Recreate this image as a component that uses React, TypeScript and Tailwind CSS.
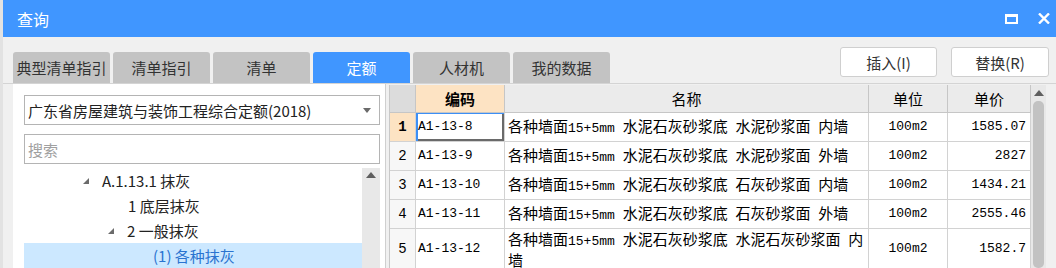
import React from "react";

const tabs = ["典型清单指引", "清单指引", "清单", "定额", "人材机", "我的数据"];

const rows = [
  { n: "1", code: "A1-13-8", name: ["各种墙面15+5mm 水泥石灰砂浆底 水泥砂浆面 内墙"], unit: "100m2", price: "1585.07" },
  { n: "2", code: "A1-13-9", name: ["各种墙面15+5mm 水泥石灰砂浆底 水泥砂浆面 外墙"], unit: "100m2", price: "2827" },
  { n: "3", code: "A1-13-10", name: ["各种墙面15+5mm 水泥石灰砂浆底 石灰砂浆面 内墙"], unit: "100m2", price: "1434.21" },
  { n: "4", code: "A1-13-11", name: ["各种墙面15+5mm 水泥石灰砂浆底 石灰砂浆面 外墙"], unit: "100m2", price: "2555.46" },
  { n: "5", code: "A1-13-12", name: ["各种墙面15+5mm 水泥石灰砂浆底 水泥石灰砂浆面 内", "墙"], unit: "100m2", price: "1582.7" },
];

// SimSun-like: half-width latin, full-width CJK
function Mixed({ text }: { text: string }) {
  const parts = text.match(/[\x00-\x7f]+|[^\x00-\x7f]+/g) ?? [];
  return (
    <>
      {parts.map((p, i) =>
        /^[\x00-\x7f]/.test(p) ? (
          <span key={i} className="font-['Liberation_Mono',monospace] text-[13px] whitespace-pre">
            {p}
          </span>
        ) : (
          <span key={i}>{p}</span>
        )
      )}
    </>
  );
}

function Tri() {
  return (
    <svg width="8" height="8" viewBox="0 0 8 8" className="shrink-0">
      <polygon points="7,1 7,7 1,7" fill="#6b6b6b" />
    </svg>
  );
}

function UpArrow() {
  return (
    <svg width="10" height="6" viewBox="0 0 10 6">
      <polygon points="5,0 10,6 0,6" fill="#5f5f5f" />
    </svg>
  );
}

export default function App() {
  return (
    <div className="w-[1056px] h-[268px] overflow-hidden bg-[#f0f0f0] font-['Noto_Sans_CJK_SC',sans-serif] text-[#333] border-l-[3px] border-l-[#e2e2e2]">
      {/* title bar */}
      <div className="h-[37px] bg-[#4096ff] flex items-center pr-[6px] text-white -ml-[3px] pl-[17px]">
        <span className="text-[16px] leading-none">查询</span>
        <div className="ml-auto flex items-center gap-[20px]">
          <svg width="13" height="10" viewBox="0 0 13 10">
            <rect x="1" y="1.5" width="11" height="7.5" fill="none" stroke="white" strokeWidth="2" />
            <rect x="0" y="0" width="13" height="3" fill="white" />
          </svg>
          <svg width="12" height="11" viewBox="0 0 12 11">
            <path d="M1 0.5 L11 10.5 M11 0.5 L1 10.5" stroke="white" strokeWidth="2.4" />
          </svg>
        </div>
      </div>

      {/* tabs + buttons */}
      <div className="flex h-[46px] pl-[10px] pr-[7px]">
        <div className="flex items-end gap-[3px]">
          {tabs.map((t) => (
            <div
              key={t}
              className={`w-[97px] h-[31px] rounded-t-[3px] flex items-center justify-center text-[15px] leading-none whitespace-nowrap ${
                t === "定额" ? "bg-[#4096ff] text-white" : "bg-[#c3c3c3] text-[#333]"
              }`}
            >
              {t}
            </div>
          ))}
        </div>
        <div className="ml-auto flex gap-[14px] pt-[10px]">
          <button className="w-[97px] h-[30px] bg-white border border-[#cfcfcf] rounded-[3px] text-[15px] text-[#333] leading-none">
            插入(I)
          </button>
          <button className="w-[98px] h-[30px] bg-white border border-[#cfcfcf] rounded-[3px] text-[15px] text-[#333] leading-none">
            替换(R)
          </button>
        </div>
      </div>

      {/* content */}
      <div className="flex h-[185px] border-t border-[#d4d4d4]">
        {/* left panel */}
        <div className="ml-[10px] w-[373px] bg-white border-r border-[#cfcfcf] pl-[11px] pr-[5px] pt-[11px] flex flex-col">
          <div className="h-[32px] border border-[#b4b4b4] flex items-center pl-[3px] pr-[8px] text-[15px] text-[#222]">
            <span className="leading-none">广东省房屋建筑与装饰工程综合定额(2018)</span>
            <svg width="8" height="5" viewBox="0 0 8 5" className="ml-auto">
              <polygon points="0,0 8,0 4,5" fill="#6a6a6a" />
            </svg>
          </div>
          <div className="mt-[9px] h-[32px] border border-[#b4b4b4] flex items-center pl-[3px] text-[15px] text-[#a0a0a0]">
            <span className="leading-none">搜索</span>
          </div>
          <div className="mt-[4px] flex flex-1">
            <div className="flex-1 flex flex-col text-[15px] text-[#222]">
              <div className="h-[25px] flex items-center pl-[58px] gap-[12px]">
                <Tri />
                <span className="leading-none">A.1.13.1 抹灰</span>
              </div>
              <div className="h-[25px] flex items-center pl-[104px]">
                <span className="leading-none">1 底层抹灰</span>
              </div>
              <div className="h-[25px] flex items-center pl-[83px] gap-[12px]">
                <Tri />
                <span className="leading-none">2 一般抹灰</span>
              </div>
              <div className="h-[25px] flex items-center pl-[129px] bg-[#cce8ff] text-[#2a73d0]">
                <span className="leading-none">(1) 各种抹灰</span>
              </div>
            </div>
            <div className="w-[18px] bg-[#e8e8e8] flex justify-center pt-[4px]">
              <UpArrow />
            </div>
          </div>
        </div>

        {/* table */}
        <div className="ml-[3px] pt-[1px] flex">
          <div className="w-[641px] border-l border-[#c8c8c8] bg-white text-black">
            <div className="grid grid-cols-[26px_89px_364px_79px_83px] h-[28px] text-[15px]">
              <div className="bg-[#dcdcdc] border-r border-b border-[#c6c6c6]" />
              <div className="bg-[#fde3c3] border-r border-b border-[#c6c6c6] flex items-center justify-center font-bold leading-none">
                编码
              </div>
              <div className="bg-[#ebebeb] border-r border-b border-[#c6c6c6] flex items-center justify-center leading-none">
                名称
              </div>
              <div className="bg-[#ebebeb] border-r border-b border-[#c6c6c6] flex items-center justify-center leading-none">
                单位
              </div>
              <div className="bg-[#ebebeb] border-r border-b border-[#c6c6c6] flex items-center justify-center leading-none">
                单价
              </div>
            </div>
            {rows.map((r, i) => (
              <div
                key={r.n}
                className={`grid grid-cols-[26px_89px_364px_79px_83px] text-[15px] ${
                  r.name.length > 1 ? "h-[40px]" : "h-[29px]"
                }`}
              >
                <div
                  className={`border-r border-b border-[#d2d2d2] flex items-center justify-center font-['Liberation_Mono',monospace] text-[14px] ${
                    i === 0 ? "bg-[#fde3c3] font-bold" : "bg-[#f7f7f7]"
                  }`}
                >
                  {r.n}
                </div>
                <div
                  className={`border-r border-b border-[#d2d2d2] flex items-center pl-[2px] font-['Liberation_Mono',monospace] text-[13px] ${
                    i === 0 ? "shadow-[inset_2px_1px_0_#3d8ff5,inset_-2px_-2px_0_#6a6a6a]" : ""
                  }`}
                >
                  {r.code}
                </div>
                <div
                  className={`border-r border-b border-[#d2d2d2] flex flex-col pl-[3px] leading-[18px] whitespace-nowrap ${
                    r.name.length > 1 ? "justify-start pt-[1px]" : "justify-center"
                  }`}
                >
                  {r.name.map((l) => (
                    <div key={l}>
                      <Mixed text={l} />
                    </div>
                  ))}
                </div>
                <div className="border-r border-b border-[#d2d2d2] flex items-center justify-center font-['Liberation_Mono',monospace] text-[13px]">
                  {r.unit}
                </div>
                <div className="border-r border-b border-[#d2d2d2] flex items-center justify-end pr-[4px] font-['Liberation_Mono',monospace] text-[13px]">
                  {r.price}
                </div>
              </div>
            ))}
          </div>
          {/* vertical scrollbar */}
          <div className="ml-[1px] w-[15px] bg-[#e8e8e8] flex flex-col items-center pt-[5px]">
            <UpArrow />
            <div className="mt-[5px] w-[11px] flex-1 bg-[#c2c2c2] rounded-[5px]" />
          </div>
        </div>
      </div>
    </div>
  );
}
